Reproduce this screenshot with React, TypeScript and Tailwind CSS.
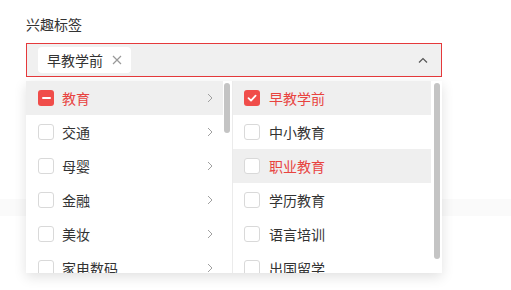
import React from "react";

const leftItems = [
    { label: "教育", state: "partial", active: true },
    { label: "交通", state: "none", active: false },
    { label: "母婴", state: "none", active: false },
    { label: "金融", state: "none", active: false },
    { label: "美妆", state: "none", active: false },
    { label: "家电数码", state: "none", active: false },
];

const rightItems = [
    { label: "早教学前", state: "checked", active: true, red: true },
    { label: "中小教育", state: "none", active: false, red: false },
    { label: "职业教育", state: "none", active: true, red: true },
    { label: "学历教育", state: "none", active: false, red: false },
    { label: "语言培训", state: "none", active: false, red: false },
    { label: "出国留学", state: "none", active: false, red: false },
];

function Checkbox({ state }: { state: string }) {
    if (state === "checked") {
        return (
            <span className="flex h-4 w-4 shrink-0 items-center justify-center rounded-[3px] bg-[#f04d4a]">
                <svg width="12" height="12" viewBox="0 0 12 12" fill="none">
                    <path d="M2.5 6.2 L5 8.6 L9.6 3.6" stroke="white" strokeWidth="1.8" strokeLinecap="round" strokeLinejoin="round" />
                </svg>
            </span>
        );
    }
    if (state === "partial") {
        return (
            <span className="flex h-4 w-4 shrink-0 items-center justify-center rounded-[3px] bg-[#f04d4a]">
                <span className="h-[2px] w-[9px] rounded-full bg-white" />
            </span>
        );
    }
    return <span className="h-4 w-4 shrink-0 rounded-[3px] border border-[#d9d9d9] bg-white" />;
}

function Arrow() {
    return (
        <svg width="8" height="10" viewBox="0 0 8 10" fill="none" className="shrink-0">
            <path d="M2 1 L6 5 L2 9" stroke="#a0a0a0" strokeWidth="1" />
        </svg>
    );
}

export default function App() {
    return (
        <div
            className="relative h-[290px] w-[511px] overflow-hidden bg-white text-[14px] text-[#333]"
            style={{ fontFamily: '"Noto Sans CJK SC", "Noto Sans", sans-serif' }}
        >
            <div className="px-[26px] pt-[14px]">
                <div className="h-5 leading-5 text-[#333]">兴趣标签</div>
                <div className="mt-[9px] flex h-[34px] w-[416px] items-center border border-[#e5393b] bg-[#f0f0f0] pl-[11px] pr-[13px]">
                    <span className="flex h-[26px] items-center gap-[9px] rounded-[4px] bg-white pl-[9px] pr-[9px]">
                        <span className="leading-none">早教学前</span>
                        <svg width="10" height="10" viewBox="0 0 10 10" fill="none">
                            <path d="M1 1 L9 9 M9 1 L1 9" stroke="#999" strokeWidth="1.2" />
                        </svg>
                    </span>
                    <svg width="10" height="6" viewBox="0 0 10 6" fill="none" className="ml-auto">
                        <path d="M1 5.5 L5 1.5 L9 5.5" stroke="#555" strokeWidth="1.2" />
                    </svg>
                </div>
            </div>

            {/* faint band of the next field, under the menu */}
            <div className="mt-[122px] h-[17px] w-full bg-[#fafafa]" />

            {/* cascader menu */}
            <div className="absolute left-[26px] top-[81px] flex h-[192px] w-[416px] overflow-hidden bg-white shadow-[0_4px_12px_rgba(0,0,0,0.12)]">
                <div className="relative w-[207px] border-r border-[#ebebeb]">
                    {leftItems.map((item) => (
                        <div
                            key={item.label}
                            className={`flex h-[34px] w-[197px] items-center pl-3 pr-[9px] ${item.active ? "bg-[#efefef]" : ""}`}
                        >
                            <Checkbox state={item.state} />
                            <span className={`ml-2 flex-1 ${item.active ? "text-[#e8433f]" : "text-[#333]"}`}>{item.label}</span>
                            <Arrow />
                        </div>
                    ))}
                    <div className="absolute right-[2px] top-[2px] h-[50px] w-[6px] rounded-full bg-[#c4c4c4]" />
                </div>
                <div className="relative flex-1">
                    {rightItems.map((item) => (
                        <div
                            key={item.label}
                            className={`flex h-[34px] w-[198px] items-center pl-[11px] ${item.active ? "bg-[#efefef]" : ""}`}
                        >
                            <Checkbox state={item.state} />
                            <span className={`ml-[9px] ${item.red ? "text-[#e8433f]" : "text-[#333]"}`}>{item.label}</span>
                        </div>
                    ))}
                    <div className="absolute right-[2px] top-[2px] h-[176px] w-[6px] rounded-full bg-[#c4c4c4]" />
                </div>
            </div>
        </div>
    );
}
